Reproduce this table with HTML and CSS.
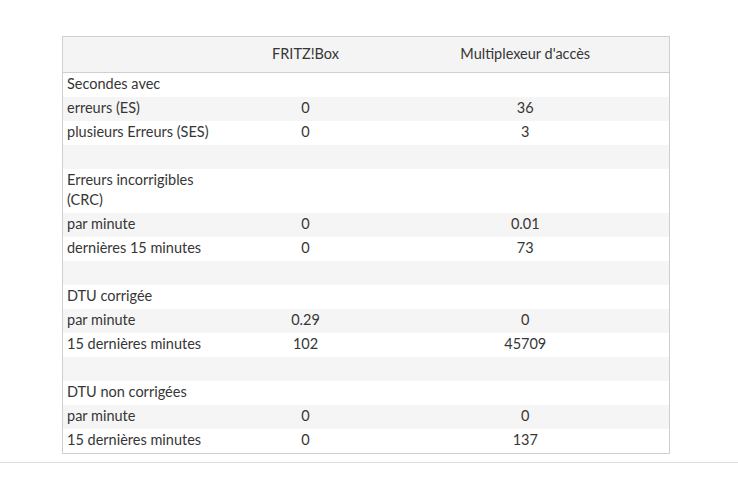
FILE: index.html
```html
<!DOCTYPE html>
<html lang="fr">
<head>
<meta charset="utf-8">
<link rel="stylesheet" href="styles.css">
</head>
<body>
<div class="page">
  <table class="stats">
    <colgroup>
      <col class="c1"><col class="c2"><col class="c3">
    </colgroup>
    <thead>
      <tr><th></th><th>FRITZ!Box</th><th>Multiplexeur d'accès</th></tr>
    </thead>
    <tbody>
      <tr><td>Secondes avec</td><td></td><td></td></tr>
      <tr class="alt"><td>erreurs (ES)</td><td>0</td><td>36</td></tr>
      <tr><td>plusieurs Erreurs (SES)</td><td>0</td><td>3</td></tr>
      <tr class="alt"><td></td><td></td><td></td></tr>
      <tr class="tall"><td>Erreurs incorrigibles<br>(CRC)</td><td></td><td></td></tr>
      <tr class="alt"><td>par minute</td><td>0</td><td>0.01</td></tr>
      <tr><td>dernières 15 minutes</td><td>0</td><td>73</td></tr>
      <tr class="alt"><td></td><td></td><td></td></tr>
      <tr><td>DTU corrigée</td><td></td><td></td></tr>
      <tr class="alt"><td>par minute</td><td>0.29</td><td>0</td></tr>
      <tr><td>15 dernières minutes</td><td>102</td><td>45709</td></tr>
      <tr class="alt"><td></td><td></td><td></td></tr>
      <tr><td>DTU non corrigées</td><td></td><td></td></tr>
      <tr class="alt"><td>par minute</td><td>0</td><td>0</td></tr>
      <tr><td>15 dernières minutes</td><td>0</td><td>137</td></tr>
    </tbody>
  </table>
  <hr class="rule">
</div>
</body>
</html>
```

FILE: styles.css
```css
html, body {
  margin: 0;
  padding: 0;
  background: #fff;
}
body {
  font-family: Lato, "Liberation Sans", sans-serif;
  font-size: 14.5px;
  color: #363636;
}
.page {
  padding-top: 36px;
}
.stats {
  margin-left: 62px;
  width: 608px;
  border-collapse: collapse;
  border: 1px solid #cfcfcf;
  table-layout: fixed;
}
.c1 { width: 167px; }
.c2 { width: 152px; }
.c3 { width: 288px; }
.stats thead tr {
  background: #f4f4f4;
  border-bottom: 1px solid #cfcfcf;
}
.stats th {
  height: 32px;
  padding: 0 4px 3px;
  font-weight: normal;
  text-align: center;
  vertical-align: middle;
}
.stats td {
  height: 22px;
  padding: 0 4px 2px;
  line-height: 20px;
  text-align: center;
  vertical-align: middle;
}
.stats td:first-child {
  text-align: left;
}
.stats tr.alt {
  background: #f5f5f5;
}
.stats tr.tall td {
  height: 42px;
}
.rule {
  margin: 8px 0 0;
  border: 0;
  border-top: 1px solid #dcdcdc;
  height: 0;
}
```
